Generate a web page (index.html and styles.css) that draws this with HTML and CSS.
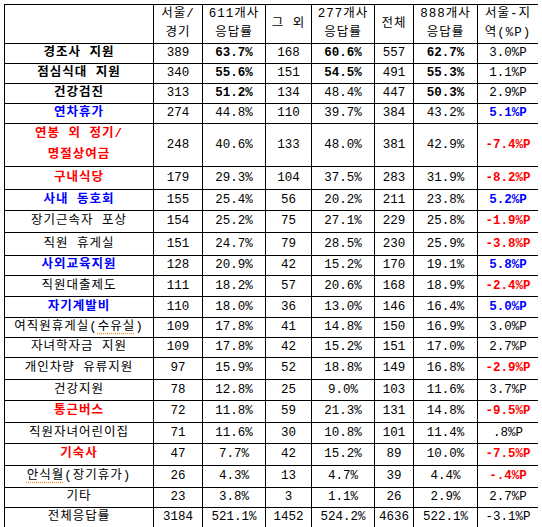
FILE: index.html
```html
<!DOCTYPE html>
<html lang="ko">
<head>
<meta charset="utf-8">
<title>복리후생 응답률</title>
<link rel="stylesheet" href="styles.css">
</head>
<body>
<table class="grid">
  <colgroup>
    <col class="c-label"><col class="c-n1"><col class="c-p1"><col class="c-n2"><col class="c-p2"><col class="c-n3"><col class="c-p3"><col class="c-d">
  </colgroup>
  <tr class="h39">
    <td></td>
    <td class="kr">서울/<br>경기</td>
    <td class="kr">611개사<br>응답률</td>
    <td class="kr">그 외</td>
    <td class="kr">277개사<br>응답률</td>
    <td class="kr">전체</td>
    <td class="kr">888개사<br>응답률</td>
    <td class="kr">서울-지<br>역(%P)</td>
  </tr>
  <tr class="h20"><td class="kr b">경조사 지원</td><td>389</td><td class="b">63.7%</td><td>168</td><td class="b">60.6%</td><td>557</td><td class="b">62.7%</td><td>3.0%P</td></tr>
  <tr class="h20"><td class="kr b">점심식대 지원</td><td>340</td><td class="b">55.6%</td><td>151</td><td class="b">54.5%</td><td>491</td><td class="b">55.3%</td><td>1.1%P</td></tr>
  <tr class="h20"><td class="kr b">건강검진</td><td>313</td><td class="b">51.2%</td><td>134</td><td>48.4%</td><td>447</td><td class="b">50.3%</td><td>2.9%P</td></tr>
  <tr class="h20"><td class="kr b blue">연차휴가</td><td>274</td><td>44.8%</td><td>110</td><td>39.7%</td><td>384</td><td>43.2%</td><td class="b blue">5.1%P</td></tr>
  <tr class="h39"><td class="kr b red two">연봉 외 정기/<br>명절상여금</td><td>248</td><td>40.6%</td><td>133</td><td>48.0%</td><td>381</td><td>42.9%</td><td class="b red">-7.4%P</td></tr>
  <tr class="h23"><td class="kr b red">구내식당</td><td>179</td><td>29.3%</td><td>104</td><td>37.5%</td><td>283</td><td>31.9%</td><td class="b red">-8.2%P</td></tr>
  <tr class="h21"><td class="kr b blue">사내 동호회</td><td>155</td><td>25.4%</td><td>56</td><td>20.2%</td><td>211</td><td>23.8%</td><td class="b blue">5.2%P</td></tr>
  <tr class="h22"><td class="kr">장기근속자 포상</td><td>154</td><td>25.2%</td><td>75</td><td>27.1%</td><td>229</td><td>25.8%</td><td class="b red">-1.9%P</td></tr>
  <tr class="h23"><td class="kr">직원 휴게실</td><td>151</td><td>24.7%</td><td>79</td><td>28.5%</td><td>230</td><td>25.9%</td><td class="b red">-3.8%P</td></tr>
  <tr class="h20"><td class="kr b blue">사외교육지원</td><td>128</td><td>20.9%</td><td>42</td><td>15.2%</td><td>170</td><td>19.1%</td><td class="b blue">5.8%P</td></tr>
  <tr class="h21"><td class="kr">직원대출제도</td><td>111</td><td>18.2%</td><td>57</td><td>20.6%</td><td>168</td><td>18.9%</td><td class="b red">-2.4%P</td></tr>
  <tr class="h21"><td class="kr b blue">자기계발비</td><td>110</td><td>18.0%</td><td>36</td><td>13.0%</td><td>146</td><td>16.4%</td><td class="b blue">5.0%P</td></tr>
  <tr class="h20"><td class="kr">여직원휴게실(<span class="spell">수유실</span>)</td><td>109</td><td>17.8%</td><td>41</td><td>14.8%</td><td>150</td><td>16.9%</td><td>3.0%P</td></tr>
  <tr class="h20"><td class="kr">자녀학자금 지원</td><td>109</td><td>17.8%</td><td>42</td><td>15.2%</td><td>151</td><td>17.0%</td><td>2.7%P</td></tr>
  <tr class="h22"><td class="kr">개인차량 유류지원</td><td>97</td><td>15.9%</td><td>52</td><td>18.8%</td><td>149</td><td>16.8%</td><td class="b red">-2.9%P</td></tr>
  <tr class="h21"><td class="kr">건강지원</td><td>78</td><td>12.8%</td><td>25</td><td>9.0%</td><td>103</td><td>11.6%</td><td>3.7%P</td></tr>
  <tr class="h22"><td class="kr b red">통근버스</td><td>72</td><td>11.8%</td><td>59</td><td>21.3%</td><td>131</td><td>14.8%</td><td class="b red">-9.5%P</td></tr>
  <tr class="h21"><td class="kr">직원자녀어린이집</td><td>71</td><td>11.6%</td><td>30</td><td>10.8%</td><td>101</td><td>11.4%</td><td>.8%P</td></tr>
  <tr class="h22"><td class="kr b red">기숙사</td><td>47</td><td>7.7%</td><td>42</td><td>15.2%</td><td>89</td><td>10.0%</td><td class="b red">-7.5%P</td></tr>
  <tr class="h22"><td class="kr"><span class="spell">안식월</span>(장기휴가)</td><td>26</td><td>4.3%</td><td>13</td><td>4.7%</td><td>39</td><td>4.4%</td><td class="b red">-.4%P</td></tr>
  <tr class="h20"><td class="kr">기타</td><td>23</td><td>3.8%</td><td>3</td><td>1.1%</td><td>26</td><td>2.9%</td><td>2.7%P</td></tr>
  <tr class="h20"><td class="kr">전체응답률</td><td>3184</td><td>521.1%</td><td>1452</td><td>524.2%</td><td>4636</td><td>522.1%</td><td>-3.1%P</td></tr>
</table>
</body>
</html>
```

FILE: styles.css
```css
html, body {
  background: #ffffff;
}
body {
  margin: 4px;
}
.grid {
  border-collapse: collapse;
  table-layout: fixed;
  width: 535px;
  font-family: "Liberation Mono", "Noto Sans CJK KR", monospace;
  font-size: 12.5px;
  color: #000000;
}
.c-label { width: 149px; }
.c-n1 { width: 49px; }
.c-p1 { width: 63px; }
.c-n2 { width: 46px; }
.c-p2 { width: 63px; }
.c-n3 { width: 39px; }
.c-p3 { width: 64px; }
.c-d { width: 61px; }
.grid td {
  border: 1px solid #000000;
  padding: 0;
  text-align: center;
  vertical-align: middle;
  white-space: nowrap;
  overflow: hidden;
  line-height: 19px;
}
.grid td.kr {
  letter-spacing: 1px;
}
.grid td.two {
  line-height: 21px;
}
.h20 td { height: 19px; }
.h21 td { height: 20px; }
.h22 td { height: 21px; }
.h23 td { height: 22px; }
.h39 td { height: 38px; }
.b { font-weight: bold; }
.red { color: #ff0000; }
.blue { color: #0000ff; }
.spell {
  text-decoration: underline dotted #f09020;
  text-underline-offset: 3px;
}
```
